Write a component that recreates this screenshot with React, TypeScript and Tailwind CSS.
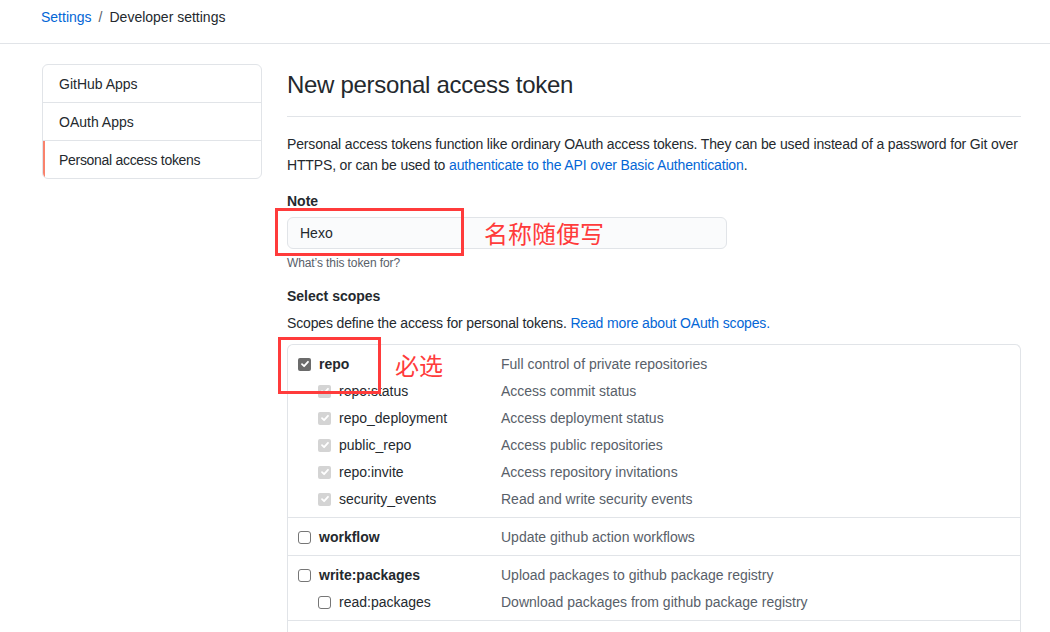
import React from 'react';

type Scope = {
  name: string;
  desc: string;
  checked?: boolean;
  children?: { name: string; desc: string; disabled?: boolean }[];
};

const scopes: Scope[] = [
  {
    name: 'repo',
    desc: 'Full control of private repositories',
    checked: true,
    children: [
      { name: 'repo:status', desc: 'Access commit status', disabled: true },
      { name: 'repo_deployment', desc: 'Access deployment status', disabled: true },
      { name: 'public_repo', desc: 'Access public repositories', disabled: true },
      { name: 'repo:invite', desc: 'Access repository invitations', disabled: true },
      { name: 'security_events', desc: 'Read and write security events', disabled: true },
    ],
  },
  { name: 'workflow', desc: 'Update github action workflows' },
  {
    name: 'write:packages',
    desc: 'Upload packages to github package registry',
    children: [{ name: 'read:packages', desc: 'Download packages from github package registry' }],
  },
];

function Check({ state }: { state: 'on' | 'off' | 'disabled' }) {
  if (state === 'off') {
    return <span className="inline-block w-[13px] h-[13px] rounded-[3px] border border-[#767676] bg-white shrink-0" />;
  }
  return (
    <span
      className={`inline-flex items-center justify-center w-[13px] h-[13px] rounded-[2px] shrink-0 ${
        state === 'on' ? 'bg-[#6b6b6b]' : 'bg-[#d4d4d4]'
      }`}
    >
      <svg width="10" height="10" viewBox="0 0 10 10" fill="none">
        <path d="M2 5.2 L4.1 7.2 L8 2.8" stroke="white" strokeWidth="1.8" strokeLinecap="round" strokeLinejoin="round" />
      </svg>
    </span>
  );
}

export default function App() {
  const font = { fontFamily: '"Liberation Sans", Arial, sans-serif' };
  return (
    <div className="relative min-h-screen bg-white text-[14px] text-[#24292e] overflow-hidden" style={font}>
      {/* Breadcrumb */}
      <div className="h-[44px] border-b border-[#e1e4e8] flex items-center pl-[41px] pb-[9px]">
        <a className="text-[#0366d6]">Settings</a>
        <span className="mx-[7px] text-[#586069]">/</span>
        <span>Developer settings</span>
      </div>

      <div className="flex pl-[42px] pr-[29px] pt-[20px] gap-[25px]">
        {/* Sidebar */}
        <nav className="w-[220px] shrink-0 self-start border border-[#e1e4e8] rounded-[6px] overflow-hidden">
          <div className="h-[38px] flex items-center pl-[16px] pt-[2px] border-b border-[#e1e4e8]">GitHub Apps</div>
          <div className="h-[38px] flex items-center pl-[16px] pt-[2px] border-b border-[#e1e4e8]">OAuth Apps</div>
          <div className="h-[37px] flex items-center pl-[14px] pt-[2px] border-l-[2px] border-[#f9826c] tracking-[-0.3px]">
            Personal access tokens
          </div>
        </nav>

        {/* Main */}
        <main className="flex-1 min-w-0">
          <h1 className="mt-[6px] pb-[16px] border-b border-[#e1e4e8] text-[24px] leading-[30px] font-normal tracking-[-0.3px]">
            New personal access token
          </h1>

          <p className="mt-[17px] leading-[21px] whitespace-nowrap tracking-[-0.15px]">
            Personal access tokens function like ordinary OAuth access tokens. They can be used instead of a password for Git over
            <br />
            HTTPS, or can be used to <a className="text-[#0366d6]">authenticate to the API over Basic Authentication</a>.
          </p>

          <div className="mt-[15px] font-bold leading-[21px]">Note</div>
          <div className="mt-[5px] w-[440px] h-[32px] rounded-[6px] border border-[#e1e4e8] bg-[#fafbfc] flex items-center pl-[12px]">
            Hexo
          </div>
          <div className="mt-[5px] text-[12px] leading-[18px] text-[#586069] tracking-[-0.1px]">What’s this token for?</div>

          <div className="mt-[14px] font-bold leading-[21px]">Select scopes</div>
          <p className="mt-[6px] leading-[21px] tracking-[-0.15px]">
            Scopes define the access for personal tokens. <a className="text-[#0366d6]">Read more about OAuth scopes.</a>
          </p>

          <div className="mt-[10px] border border-[#e1e4e8] border-b-0 rounded-t-[6px]">
            {scopes.map((s, i) => (
              <div key={s.name} className={`py-[5px] pl-[10px] ${i > 0 ? 'border-t border-[#e1e4e8]' : ''}`}>
                <div className="flex items-center h-[27px] pt-[1px]">
                  <div className="w-[203px] flex items-center gap-[8px] shrink-0">
                    <Check state={s.checked ? 'on' : 'off'} />
                    <span className="font-bold">{s.name}</span>
                  </div>
                  <span className="text-[#586069]">{s.desc}</span>
                </div>
                {s.children?.map((c) => (
                  <div key={c.name} className="flex items-center h-[27px] pt-[1px]">
                    <div className="w-[203px] flex items-center gap-[8px] shrink-0 pl-[20px]">
                      <Check state={c.disabled ? 'disabled' : 'off'} />
                      <span>{c.name}</span>
                    </div>
                    <span className="text-[#586069]">{c.desc}</span>
                  </div>
                ))}
              </div>
            ))}
            <div className="h-[14px] border-t border-[#e1e4e8]" />
          </div>
        </main>
      </div>

      {/* Annotations */}
      <div className="absolute left-[275px] top-[208px] w-[189px] h-[48px] border-[3px] border-[#ff3b3b]" />
      <div
        className="absolute left-[484px] top-[217px] text-[24px] leading-[32px] text-[#ff3b3b]"
        style={{ fontFamily: '"Noto Sans CJK SC", sans-serif' }}
      >
        名称随便写
      </div>
      <div className="absolute left-[278px] top-[337px] w-[103px] h-[57px] border-[3px] border-[#ff3b3b]" />
      <div
        className="absolute left-[395px] top-[349px] text-[24px] leading-[32px] text-[#ff3b3b]"
        style={{ fontFamily: '"Noto Sans CJK SC", sans-serif' }}
      >
        必选
      </div>
    </div>
  );
}
